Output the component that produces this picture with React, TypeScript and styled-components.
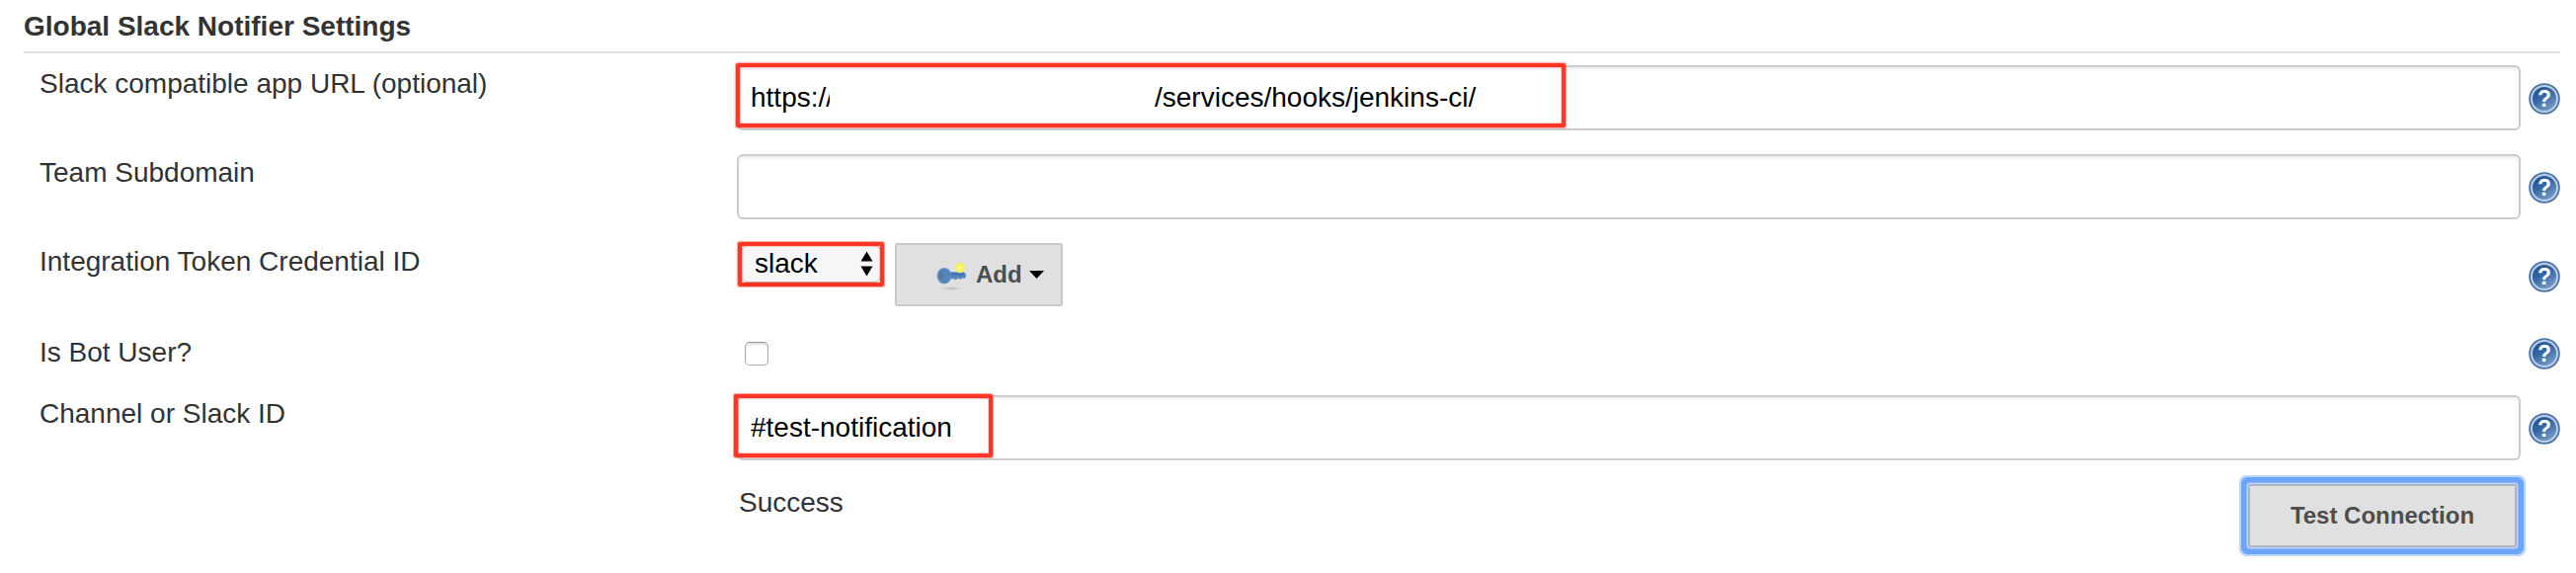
import React from "react";
import styled, { createGlobalStyle } from "styled-components";

const Global = createGlobalStyle`
  body { margin: 0; background: #fff; }
  * { box-sizing: border-box; }
`;

const Page = styled.main`
  width: 2608px;
  height: 580px;
  padding: 11px 16px 0 24px;
  color: #333;
  font: 28px/32px "Liberation Sans", Arial, sans-serif;
`;

const Heading = styled.h2`
  margin: 0 0 12px;
  height: 43px;
  border-bottom: 2px solid #e0e0e0;
  font-size: 28px;
  line-height: 32px;
  font-weight: 700;
`;

const Row = styled.div<{ $height?: number }>`
  display: grid;
  grid-template-columns: 706px 1806px 32px;
  column-gap: 8px;
  padding-left: 8px;
  height: ${(p) => p.$height ?? 90}px;
  align-items: start;
`;

const Label = styled.label<{ $top?: number }>`
  padding: ${(p) => p.$top ?? 3}px 0 0 8px;
  white-space: nowrap;
`;

const Control = styled.div`
  position: relative;
  display: flex;
  align-items: flex-start;
`;

const Field = styled.div`
  display: flex;
  align-items: center;
  width: 100%;
  height: 66px;
  padding: 0 12px;
  border: 2px solid #ccc;
  border-radius: 6px;
  background: #fff;
  box-shadow: inset 0 2px 3px rgba(0, 0, 0, 0.075);
  color: #000;
  white-space: pre;
`;

const UrlScheme = styled.span`
  width: 409px;
`;

const HostCover = styled.span`
  position: absolute;
  left: 94px;
  top: 12px;
  width: 320px;
  height: 42px;
  background: #fff;
`;

const Highlight = styled.div<{ $x: number; $y: number; $w: number; $h: number }>`
  position: absolute;
  left: ${(p) => p.$x}px;
  top: ${(p) => p.$y}px;
  width: ${(p) => p.$w}px;
  height: ${(p) => p.$h}px;
  border: 4px solid #ff3526;
  border-radius: 2px;
  box-shadow: 0 0 1px 0.5px rgba(255, 53, 38, 0.45), inset 0 0 1px 0.5px rgba(255, 53, 38, 0.45);
`;

const Select = styled.div`
  display: flex;
  align-items: center;
  justify-content: space-between;
  width: 142px;
  height: 38px;
  margin: 2px 14px 0 4px;
  padding: 0 7px 0 13px;
  border: 1px solid #bbb;
  border-radius: 7px;
  background: #f7f7f7;
  color: #000;
`;

const AddButton = styled.button`
  display: flex;
  align-items: center;
  width: 170px;
  height: 64px;
  padding: 0 0 0 40px;
  border: 2px solid #c8c8c8;
  border-radius: 2px;
  background: #e0e0e0;
  color: #4d4d4d;
  font: 700 24px/28px "Liberation Sans", Arial, sans-serif;
`;

const AddText = styled.span`
  margin: 0 7px 0 8px;
`;

const Checkbox = styled.span`
  width: 24px;
  height: 24px;
  margin: 10px 0 0 8px;
  border: 1.5px solid #aaa;
  border-top-color: #989898;
  border-radius: 5px;
  background: #fff;
  box-shadow: inset 0 2px 2px rgba(0, 0, 0, 0.12);
`;

const Status = styled.span`
  padding: 3px 0 0 2px;
`;

const TestButton = styled.button`
  width: 272px;
  height: 64px;
  margin: 0 4px 0 auto;
  padding: 0;
  border: 2px solid #aab4c4;
  border-radius: 2px;
  background: #e0e0e0;
  color: #4d4d4d;
  font: 700 24px/28px "Liberation Sans", Arial, sans-serif;
  box-shadow: 0 0 0 1.5px #b9d3fa, 0 0 0 7px #6ba4f8, 0 0 0 9px #bdd6fb;
`;

const HelpSlot = styled.div<{ $top?: number }>`
  height: 32px;
  margin-top: ${(p) => p.$top ?? 18}px;
`;

const HelpGlyph = styled.text`
  font: 700 23px "Liberation Sans", Arial, sans-serif;
`;

function Help({ top }: { top?: number }) {
  return (
    <HelpSlot $top={top}>
      <svg width="32" height="32" viewBox="0 0 32 32" display="block">
        <defs>
          <linearGradient id="helpFill" x1="0" y1="0" x2="0.6" y2="1">
            <stop offset="0" stopColor="#204c8c" />
            <stop offset="0.5" stopColor="#3565a5" />
            <stop offset="1" stopColor="#759ac8" />
          </linearGradient>
        </defs>
        <circle cx="16" cy="16" r="15.8" fill="#4a74aa" />
        <circle cx="16" cy="16" r="13" fill="url(#helpFill)" stroke="#bccde2" strokeWidth="2" />
        <HelpGlyph x="16" y="24" textAnchor="middle" fill="#fff">?</HelpGlyph>
      </svg>
    </HelpSlot>
  );
}

function SelectArrows() {
  return (
    <svg width="13" height="26" viewBox="0 0 13 26">
      <path d="M6.500 0.500L12.500 10.500H.5ZM6.500 25.500L.5 15.500H12.500Z" fill="#000" />
    </svg>
  );
}

function KeyIcon() {
  return (
    <svg width="32" height="32" viewBox="0 0 32 32">
      <defs>
        <radialGradient id="glow">
          <stop offset="0" stopColor="#fffbb0" />
          <stop offset="0.45" stopColor="#fff04c" />
          <stop offset="0.75" stopColor="#f5ec72" />
          <stop offset="1" stopColor="#e8e4a8" stopOpacity="0" />
        </radialGradient>
        <radialGradient id="shadow">
          <stop offset="0" stopColor="#999" stopOpacity="0.6" />
          <stop offset="1" stopColor="#bbb" stopOpacity="0" />
        </radialGradient>
      </defs>
      <ellipse cx="15.500" cy="30" rx="13" ry="2" fill="url(#shadow)" />
      <path d="M8 9.500C11 9.500 13 11 14.500 13.500H28L30 16L29 19.500H26L24.500 20.500L22 19.500L19.500 21L17.500 20H14.500C13.500 23 11 25 8 25C4 25 1 21.500 1 17.200S4 9.500 8 9.500Z" fill="#5285c0" stroke="#7a9fca" strokeWidth="1" />
      <path d="M15 15.500H28" stroke="#3a6faa" strokeWidth="1.500" />
      <ellipse cx="5" cy="17" rx="2" ry="3.500" fill="#5d7590" />
      <circle cx="24" cy="9" r="6" fill="url(#glow)" />
    </svg>
  );
}

export default function App() {
  return (
    <Page>
      <Global />
      <Heading>Global Slack Notifier Settings</Heading>
      <Row>
        <Label>Slack compatible app URL (optional)</Label>
        <Control>
          <Field>
            <UrlScheme>https://</UrlScheme>
            <span>/services/hooks/jenkins-ci/</span>
          </Field>
          <HostCover />
          <Highlight $x={-1} $y={-2} $w={840} $h={65} />
        </Control>
        <Help />
      </Row>
      <Row>
        <Label>Team Subdomain</Label>
        <Control>
          <Field />
        </Control>
        <Help />
      </Row>
      <Row>
        <Label>Integration Token Credential ID</Label>
        <Control>
          <Select>
            slack
            <SelectArrows />
          </Select>
          <AddButton>
            <KeyIcon />
            <AddText>Add</AddText>
            <svg width="15" height="8" viewBox="0 0 15 8">
              <path d="M0 0H15L7.500 8Z" fill="#000" />
            </svg>
          </AddButton>
          <Highlight $x={1} $y={-1} $w={148} $h={45} />
        </Control>
        <Help />
      </Row>
      <Row $height={64}>
        <Label $top={5}>Is Bot User?</Label>
        <Control>
          <Checkbox />
        </Control>
        <Help top={6} />
      </Row>
      <Row>
        <Label>Channel or Slack ID</Label>
        <Control>
          <Field>#test-notification</Field>
          <Highlight $x={-3} $y={-1} $w={262} $h={64} />
        </Control>
        <Help />
      </Row>
      <Row>
        <span />
        <Control>
          <Status>Success</Status>
          <TestButton>Test Connection</TestButton>
        </Control>
      </Row>
    </Page>
  );
}
